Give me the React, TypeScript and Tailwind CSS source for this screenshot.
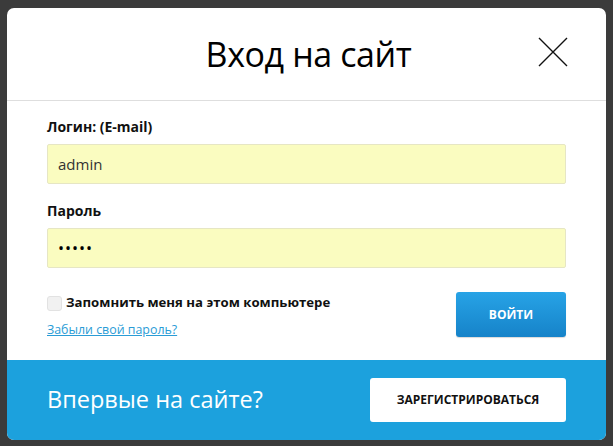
export default function App() {
  return (
    <div className="min-h-[446px] bg-[#3b3b3b] pt-[8px] pl-[7px]" style={{ fontFamily: '"Open Sans", "Noto Sans", sans-serif' }}>
      <div className="w-[599px] h-[432px] rounded-[7px] overflow-hidden bg-white flex flex-col">
        <div className="relative h-[93px] shrink-0 flex items-center justify-center border-b border-[#dedede]">
          <h2 className="text-[34px] leading-none text-black tracking-[-0.4px] pl-[4px]">Вход на сайт</h2>
          <button className="absolute right-[38px] top-[29px] w-[30px] h-[30px]" aria-label="Закрыть">
            <svg viewBox="0 0 30 30" className="w-full h-full" fill="none" stroke="#111" strokeWidth="1.4">
              <path d="M1 1 L29 29 M29 1 L1 29" />
            </svg>
          </button>
        </div>

        <div className="px-[40px] pt-[16px]">
          <label className="block h-[20px] leading-[20px] text-[14px] font-bold text-[#111]">Логин: (E-mail)</label>
          <div className="mt-[7px] h-[40px] rounded-[2px] border border-[#e6e6c4] bg-[#fafcc0] px-[10px] flex items-center text-[15px] text-[#333]">
            admin
          </div>
          <label className="block mt-[17px] h-[20px] leading-[20px] text-[14px] font-bold text-[#111]">Пароль</label>
          <div className="mt-[7px] h-[40px] rounded-[2px] border border-[#e6e6c4] bg-[#fafcc0] px-[10px] flex items-center text-[16px] text-black tracking-[1px]">
            •••••
          </div>

          <div className="mt-[24px] h-[45px] flex justify-between">
            <div className="flex flex-col">
              <div className="flex items-center gap-[4px] mt-[3px] h-[16px]">
                <span className="w-[15px] h-[15px] rounded-[3px] border border-[#e2e2e2] bg-[#f1f1f1]" />
                <span className="text-[13.2px] font-bold text-[#111]">Запомнить меня на этом компьютере</span>
              </div>
              <a href="#" className="mt-[11px] text-[12.4px] leading-[16px] text-[#2a9cd6] underline">Забыли свой пароль?</a>
            </div>
            <button className="w-[110px] h-[45px] rounded-[3px] bg-gradient-to-b from-[#27a3e6] to-[#1683c9] text-white text-[12px] font-bold shadow-[0_1px_1px_rgba(0,0,0,0.15)]">
              ВОЙТИ
            </button>
          </div>
        </div>

        <div className="mt-auto h-[80px] bg-[#1ca1dd] px-[40px] flex items-center justify-between">
          <span className="text-[23.5px] text-white">Впервые на сайте?</span>
          <button className="w-[196px] h-[44px] rounded-[3px] bg-white text-[12px] font-bold text-[#111]">
            ЗАРЕГИСТРИРОВАТЬСЯ
          </button>
        </div>
      </div>
    </div>
  );
}
